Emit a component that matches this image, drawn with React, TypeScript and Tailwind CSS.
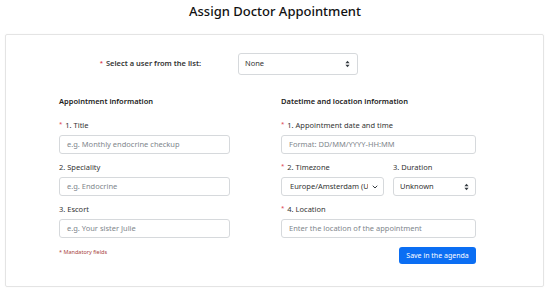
import { ChevronDown } from "lucide-react";

function UpDown() {
  return (
    <svg width="5" height="8" viewBox="0 0 6 9" className="shrink-0">
      <path d="M3 0.5 L5.5 3.5 L0.5 3.5 Z" fill="#343a40" />
      <path d="M3 8.5 L5.5 5.5 L0.5 5.5 Z" fill="#343a40" />
    </svg>
  );
}

function Star() {
  return <span className="text-[#dc3545] text-[6px] align-top mr-[3px] leading-[10px]">*</span>;
}

function Label({ text, required }: { text: string; required?: boolean }) {
  return (
    <div className="h-[12px] leading-[12px] text-[7.5px] text-[#333] mb-[4px] whitespace-nowrap">
      {required && <Star />}
      {text}
    </div>
  );
}

function Input({ placeholder }: { placeholder: string }) {
  return (
    <div className="h-[19px] border border-[#d6d9dc] rounded-[3px] bg-white flex items-center pl-[7px] text-[7.5px] text-[#80868c] whitespace-nowrap overflow-hidden">
      {placeholder}
    </div>
  );
}

export default function App() {
  return (
    <div
      className="w-[550px] h-[294px] bg-white overflow-hidden text-[#212529]"
      style={{ fontFamily: '"Noto Sans", "Open Sans", sans-serif' }}
    >
      {/* Title */}
      <div className="h-[34px] flex justify-center">
        <h1 className="text-[13px] leading-[22px] font-medium text-[#111]">Assign Doctor Appointment</h1>
      </div>

      {/* Card */}
      <div className="ml-[5px] w-[539px] border border-[#e4e4e4] rounded-[2px] pt-[18px] pb-[22px] shadow-[0_0_2px_rgba(0,0,0,0.04)]">
        {/* User select */}
        <div className="flex items-center h-[22px]">
          <div className="w-[195px] text-right text-[7.5px] font-semibold text-[#333] whitespace-nowrap">
            <Star />
            Select a user from the list:
          </div>
          <div className="ml-[37px] w-[120px] h-[22px] border border-[#d6d9dc] rounded-[3px] flex items-center justify-between pl-[6px] pr-[7px] text-[7.5px] text-[#333]">
            None
            <UpDown />
          </div>
        </div>

        {/* Columns */}
        <div className="flex mt-[20px] pl-[53px]">
          {/* Left */}
          <div className="w-[171px] flex flex-col">
            <div className="h-[12px] leading-[12px] text-[7.5px] font-semibold text-[#222] mb-[12px] whitespace-nowrap">
              Appointment information
            </div>
            <Label text="1. Title" required />
            <Input placeholder="e.g. Monthly endocrine checkup" />
            <div className="h-[7px]" />
            <Label text="2. Speciality" />
            <Input placeholder="e.g. Endocrine" />
            <div className="h-[7px]" />
            <Label text="3. Escort" />
            <Input placeholder="e.g. Your sister Julie" />
            <div className="mt-[9px] h-[10px] leading-[10px] text-[5.5px] text-[#a94442] whitespace-nowrap">
              * Mandatory fields
            </div>
          </div>

          {/* Right */}
          <div className="ml-[51px] w-[195px] flex flex-col">
            <div className="h-[12px] leading-[12px] text-[7.5px] font-semibold text-[#222] mb-[12px] whitespace-nowrap">
              Datetime and location information
            </div>
            <Label text="1. Appointment date and time" required />
            <Input placeholder="Format: DD/MM/YYYY-HH:MM" />
            <div className="h-[7px]" />
            <div className="flex">
              <div className="w-[103px] flex flex-col">
                <Label text="2. Timezone" required />
                <div className="h-[19px] border border-[#d6d9dc] rounded-[3px] flex items-center pl-[8px] pr-[4px] text-[7.5px] text-[#333]">
                  <span className="flex-1 overflow-hidden whitespace-nowrap">Europe/Amsterdam (UTC+01:00)</span>
                  <ChevronDown className="w-[8px] h-[8px] ml-[3px] shrink-0" strokeWidth={3} color="#343a40" />
                </div>
              </div>
              <div className="ml-[9px] w-[83px] flex flex-col">
                <Label text="3. Duration" />
                <div className="h-[19px] border border-[#d6d9dc] rounded-[3px] flex items-center justify-between pl-[6px] pr-[6px] text-[7.5px] text-[#333]">
                  Unknown
                  <UpDown />
                </div>
              </div>
            </div>
            <div className="h-[7px]" />
            <Label text="4. Location" required />
            <Input placeholder="Enter the location of the appointment" />
            <div className="mt-[9px] flex justify-end">
              <button className="w-[77px] h-[17px] rounded-[3px] bg-[#0b6ef3] text-white text-[7px] leading-[17px] whitespace-nowrap">
                Save in the agenda
              </button>
            </div>
          </div>
        </div>
      </div>
    </div>
  );
}
